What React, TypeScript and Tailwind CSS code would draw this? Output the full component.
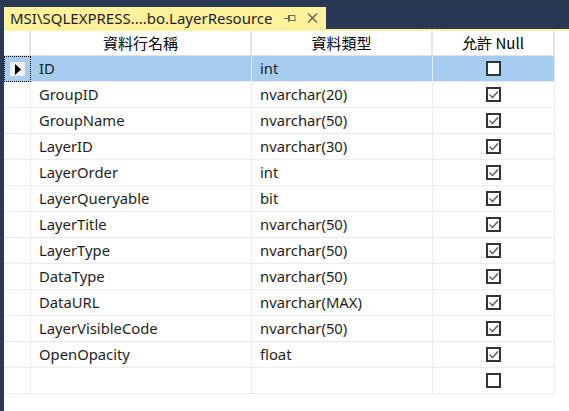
import React from "react";

const rows: { name: string; type: string; nul: boolean }[] = [
  { name: "ID", type: "int", nul: false },
  { name: "GroupID", type: "nvarchar(20)", nul: true },
  { name: "GroupName", type: "nvarchar(50)", nul: true },
  { name: "LayerID", type: "nvarchar(30)", nul: true },
  { name: "LayerOrder", type: "int", nul: true },
  { name: "LayerQueryable", type: "bit", nul: true },
  { name: "LayerTitle", type: "nvarchar(50)", nul: true },
  { name: "LayerType", type: "nvarchar(50)", nul: true },
  { name: "DataType", type: "nvarchar(50)", nul: true },
  { name: "DataURL", type: "nvarchar(MAX)", nul: true },
  { name: "LayerVisibleCode", type: "nvarchar(50)", nul: true },
  { name: "OpenOpacity", type: "float", nul: true },
  { name: "", type: "", nul: false },
];

function CheckBox({ checked }: { checked: boolean }) {
  return (
    <div className="w-[15px] h-[15px] border-2 border-[#333333] bg-white flex items-center justify-center">
      {checked && (
        <svg width="11" height="11" viewBox="0 0 11 11">
          <polyline points="1.5,5.5 4.5,8.5 10,2.5" fill="none" stroke="#5a5a5a" strokeWidth="1.4" />
        </svg>
      )}
    </div>
  );
}

export default function App() {
  return (
    <div className="w-[569px] h-[411px] bg-[#293955] flex flex-col overflow-hidden" style={{ fontFamily: '"Noto Sans", "Noto Sans CJK TC", sans-serif' }}>
      <div className="h-[7px] shrink-0" />
      <div className="flex h-[22px] shrink-0 pl-[4px]">
        <div className="w-[322px] bg-[#fff29d] flex items-center pl-[6px] text-[#1e1e1e]">
          <span className="text-[15px] leading-none whitespace-nowrap">MSI\SQLEXPRESS....bo.LayerResource</span>
          <div className="flex-1" />
          <svg width="12" height="8" viewBox="0 0 12 8" className="mr-[11px] mt-[1px] shrink-0">
            <line x1="0" y1="3.5" x2="4" y2="3.5" stroke="#6b6b55" strokeWidth="1" />
            <line x1="4.5" y1="0" x2="4.5" y2="7" stroke="#6b6b55" strokeWidth="1" />
            <rect x="5.5" y="0.5" width="5.5" height="5" fill="none" stroke="#6b6b55" strokeWidth="1" />
            <line x1="5" y1="5.5" x2="11.5" y2="5.5" stroke="#6b6b55" strokeWidth="1" />
          </svg>
          <svg width="11" height="10" viewBox="0 0 11 10" className="mr-[8px] shrink-0">
            <line x1="1" y1="0.5" x2="10" y2="9.5" stroke="#6b6b55" strokeWidth="1.5" />
            <line x1="10" y1="0.5" x2="1" y2="9.5" stroke="#6b6b55" strokeWidth="1.5" />
          </svg>
        </div>
      </div>
      <div className="h-[2px] shrink-0 ml-[4px] bg-[#fff29d]" />
      <div className="flex-1 ml-[4px] bg-white">
        <div className="flex h-[25px] border-b border-[#e2e2e2] w-[551px] text-[15px] text-black" style={{ fontFamily: '"Noto Sans CJK TC", sans-serif' }}>
          <div className="w-[27px] border-r-2 border-[#e4e4e4]" />
          <div className="w-[221px] border-r-2 border-[#e4e4e4] flex items-center justify-center">資料行名稱</div>
          <div className="w-[181px] border-r-2 border-[#e4e4e4] flex items-center justify-center">資料類型</div>
          <div className="w-[122px] border-r-2 border-[#e4e4e4] flex items-center justify-center">允許 Null</div>
        </div>
        {rows.map((r, i) => {
          const sel = i === 0;
          const bg = sel ? "bg-[#a6cdf0]" : "bg-white";
          return (
            <div key={i} className="flex h-[26px] w-[551px] text-[14.8px] text-[#1e1e1e]">
              <div className={`w-[27px] ${bg} ${sel ? "border border-dotted border-black" : "border-r border-b border-[#ececec]"} flex items-center justify-center`}>
                {sel && (
                  <div className="w-[15px] h-[14px] bg-[#f0f0f0] flex items-center justify-center">
                    <svg width="6" height="11" viewBox="0 0 6 11">
                      <polygon points="0,0 6,5.5 0,11" fill="#000" />
                    </svg>
                  </div>
                )}
              </div>
              <div className={`w-[221px] ${bg} border-r border-b border-[#ececec] flex items-center pl-[8px]`}>{r.name}</div>
              <div className={`w-[181px] ${bg} border-r border-b border-[#ececec] flex items-center pl-[8px]`}>{r.type}</div>
              <div className={`w-[122px] ${bg} border-r border-b border-[#ececec] flex items-center justify-center`}>
                <CheckBox checked={r.nul} />
              </div>
            </div>
          );
        })}
      </div>
    </div>
  );
}
